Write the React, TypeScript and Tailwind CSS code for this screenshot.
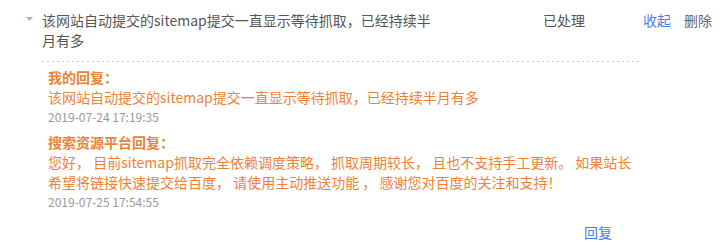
import React from "react";

export default function App() {
  const font = { fontFamily: '"Noto Sans CJK SC", "Noto Sans", sans-serif' };
  return (
    <div className="w-[726px] h-[251px] bg-white overflow-hidden" style={font}>
      <div className="flex items-start pt-[10px] pl-[26px] text-[14px] leading-[20px]">
        <div className="w-[16px] pt-[7px]">
          <svg width="7" height="4" viewBox="0 0 7 4">
            <polygon points="0,0 7,0 3.5,4" fill="#a9b4c2" />
          </svg>
        </div>
        <div className="w-[392px] text-[#555]">
          该网站自动提交的sitemap提交一直显示等待抓取，已经持续半月有多
        </div>
        <div className="ml-[109px] text-[#555]">已处理</div>
        <div className="ml-[58px] text-[#4a7bf7]">收起</div>
        <div className="ml-[13px] text-[#666]">删除</div>
      </div>
      <div className="ml-[42px] w-[600px] mt-[11px]">
        <div className="h-px bg-[linear-gradient(to_right,#cccccc_50%,transparent_50%)] bg-[length:5px_1px]" />
        <div className="pl-[6px] pt-[5px] text-[14px] leading-[20px] text-[#ec8237]">
          <div className="font-bold">我的回复：</div>
          <div>该网站自动提交的sitemap提交一直显示等待抓取，已经持续半月有多</div>
          <div className="text-[12px] text-[#999]">2019-07-24 17:19:35</div>
          <div className="font-bold mt-[5px]">搜索资源平台回复：</div>
          <div className="w-[590px]">
            您好， 目前sitemap抓取完全依赖调度策略， 抓取周期较长， 且也不支持手工更新。 如果站长希望将链接快速提交给百度， 请使用主动推送功能 ， 感谢您对百度的关注和支持！
          </div>
          <div className="text-[12px] text-[#999]">2019-07-25 17:54:55</div>
          <div className="flex justify-end pr-[30px] mt-[10px]">
            <span className="text-[#4a7bf7]">回复</span>
          </div>
        </div>
      </div>
    </div>
  );
}
